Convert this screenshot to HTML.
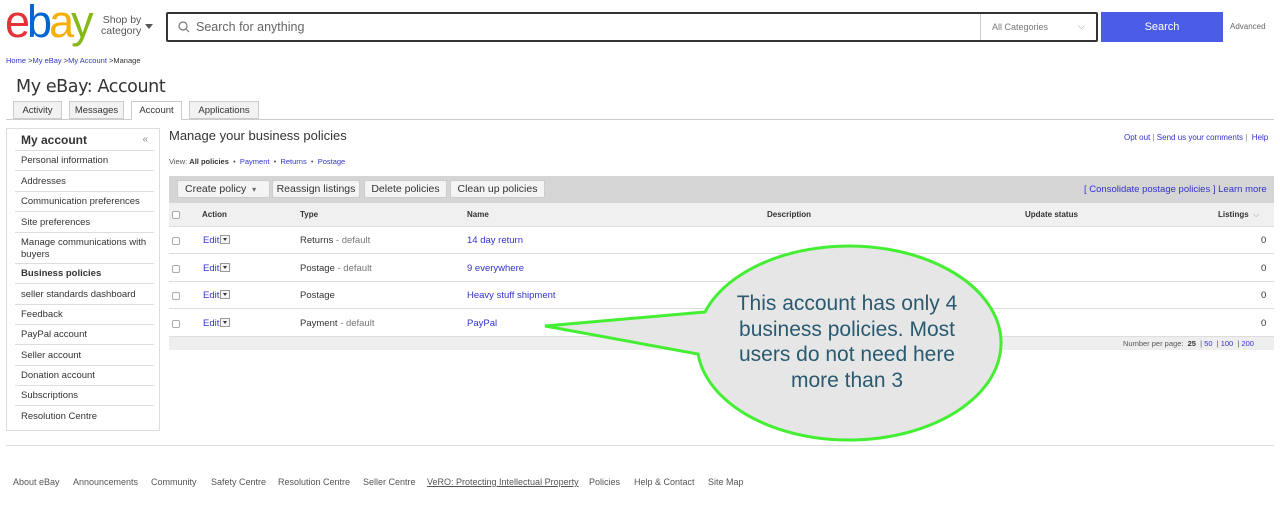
<!DOCTYPE html>
<html><head><style>
*{margin:0;padding:0;box-sizing:border-box}
body{width:1280px;height:510px;position:relative;background:#fff;font-family:"Liberation Sans",Arial,sans-serif;color:#333;overflow:hidden}
.a{position:absolute;white-space:nowrap}
.lk{color:#3333cc}
.side div{position:absolute;left:15px;width:139px;font-size:9.5px;color:#333;border-bottom:1px solid #ddd;padding-left:6px}
.btn{position:absolute;top:180px;height:18px;background:#f4f4f4;border:1px solid #ccc;border-radius:2px;font-size:10.5px;color:#333;text-align:center;line-height:16px}
.row{position:absolute;left:169px;width:1105px;height:1px;background:#ddd}
.cb{position:absolute;left:172px;width:8px;height:8px;border:1px solid #aaa;border-radius:2px;background:#fff}
.ed{position:absolute;left:203px;font-size:9.5px;color:#3333cc}
.ed span{display:inline-block;width:10px;height:9px;border:1px solid #999;margin-left:1px;vertical-align:-1px;position:relative;background:#f5f5f5}
.ed span:after{content:"";position:absolute;left:2px;top:2px;border:2.5px solid transparent;border-top:3px solid #333}
.t{position:absolute;font-size:9.5px}
.foot{position:absolute;top:477px;font-size:9px;color:#555}
</style></head><body>
<!-- logo -->
<div class="a" style="left:5px;top:-2px;font-size:45px;letter-spacing:-3px;line-height:48px">
<span style="color:#e53238">e</span><span style="color:#0064d2">b</span><span style="color:#f5af02">a</span><span style="color:#86b817">y</span></div>
<div class="a" style="left:101px;top:15px;font-size:10.5px;color:#555;line-height:11px;text-align:right">Shop by<br>category</div>
<div class="a" style="left:145px;top:24px;border:4px solid transparent;border-top:5px solid #555"></div>
<div class="a" style="left:166px;top:12px;width:932px;height:30px;border:2px solid #333;border-radius:2px"></div>
<svg class="a" style="left:178px;top:21px" width="12" height="12"><circle cx="5" cy="5" r="4" fill="none" stroke="#777" stroke-width="1.2"/><line x1="8" y1="8" x2="11" y2="11" stroke="#777" stroke-width="1.2"/></svg>
<div class="a" style="left:196px;top:20px;font-size:12.5px;color:#666">Search for anything</div>
<div class="a" style="left:980px;top:14px;width:1px;height:26px;background:#ccc"></div>
<div class="a" style="left:992px;top:22px;font-size:9px;color:#777">All Categories</div>
<div class="a" style="left:1078px;top:21px;font-size:9px;color:#888">⌵</div>
<div class="a" style="left:1101px;top:12px;width:122px;height:30px;background:#4b5ce8;color:#fff;font-size:11px;text-align:center;line-height:30px">Search</div>
<div class="a" style="left:1230px;top:22px;font-size:8px;color:#666">Advanced</div>
<div class="a" style="left:6px;top:56px;font-size:7.5px;color:#333"><span class="lk">Home</span> &gt;<span class="lk">My eBay</span> &gt;<span class="lk">My Account</span> &gt;Manage</div>
<div class="a" style="left:16px;top:77px;font-size:17.5px;color:#333;font-family:'DejaVu Sans',sans-serif;letter-spacing:-0.4px">My eBay: Account</div>
<!-- tabs -->
<div class="a" style="left:6px;top:119px;width:1268px;height:1px;background:#ccc"></div>
<div class="a" style="left:13px;top:101px;width:49px;height:18px;border:1px solid #ccc;background:#f2f2f2;font-size:9.5px;text-align:center;line-height:17px">Activity</div>
<div class="a" style="left:69px;top:101px;width:55px;height:18px;border:1px solid #ccc;background:#f2f2f2;font-size:9.5px;text-align:center;line-height:17px">Messages</div>
<div class="a" style="left:131px;top:101px;width:51px;height:19px;border:1px solid #ccc;border-bottom:none;background:#fff;font-size:9.5px;text-align:center;line-height:17px">Account</div>
<div class="a" style="left:189px;top:101px;width:70px;height:18px;border:1px solid #ccc;background:#f2f2f2;font-size:9.5px;text-align:center;line-height:17px">Applications</div>
<!-- sidebar -->
<div class="a" style="left:6px;top:128px;width:154px;height:303px;border:1px solid #ddd"></div>
<div class="side">
<div style="top:130px;height:21px;font-size:12px;font-weight:bold;line-height:20px">My account<span style="position:absolute;right:6px;font-weight:normal;font-size:10px;color:#888">«</span></div>
<div style="top:151px;height:20px;line-height:20px">Personal information</div>
<div style="top:171px;height:21px;line-height:21px">Addresses</div>
<div style="top:192px;height:20px;line-height:20px">Communication preferences</div>
<div style="top:212px;height:21px;line-height:21px">Site preferences</div>
<div style="top:233px;height:31px;line-height:12px;padding-top:4px">Manage communications with<br>buyers</div>
<div style="top:264px;height:20px;line-height:20px;font-weight:bold">Business policies</div>
<div style="top:284px;height:21px;line-height:21px">seller standards dashboard</div>
<div style="top:305px;height:20px;line-height:20px">Feedback</div>
<div style="top:325px;height:20px;line-height:20px">PayPal account</div>
<div style="top:345px;height:21px;line-height:21px">Seller account</div>
<div style="top:366px;height:20px;line-height:20px">Donation account</div>
<div style="top:386px;height:20px;line-height:20px">Subscriptions</div>
<div style="top:406px;height:21px;line-height:21px;border-bottom:none">Resolution Centre</div>
</div>
<!-- main -->
<div class="a" style="left:169px;top:128px;font-size:13px;color:#333">Manage your business policies</div>
<div class="a" style="left:1124px;top:133px;font-size:8px;color:#888"><span class="lk">Opt out</span> | <span class="lk">Send us your comments</span> | &nbsp;<span class="lk">Help</span></div>
<div class="a" style="left:169px;top:157px;font-size:7.5px;color:#555">View: <b style="color:#333">All policies</b> &nbsp;• &nbsp;<span class="lk">Payment</span> &nbsp;• &nbsp;<span class="lk">Returns</span> &nbsp;• &nbsp;<span class="lk">Postage</span></div>
<div class="a" style="left:169px;top:176px;width:1105px;height:27px;background:#d5d5d5"></div>
<div class="btn" style="left:177px;width:93px;text-align:left;padding-left:7px">Create policy &nbsp;<span style="font-size:8px;color:#666">▾</span></div>
<div class="btn" style="left:272px;width:88px">Reassign listings</div>
<div class="btn" style="left:364px;width:83px">Delete policies</div>
<div class="btn" style="left:450px;width:95px">Clean up policies</div>
<div class="a lk" style="left:1084px;top:184px;font-size:9.5px">[ Consolidate postage policies ] Learn more</div>
<div class="a" style="left:169px;top:203px;width:1105px;height:23px;background:#f0f0f0"></div>
<div class="cb" style="top:211px"></div>
<div class="t" style="left:202px;top:210px;font-size:8px;font-weight:bold">Action</div>
<div class="t" style="left:300px;top:210px;font-size:8px;font-weight:bold">Type</div>
<div class="t" style="left:467px;top:210px;font-size:8px;font-weight:bold">Name</div>
<div class="t" style="left:767px;top:210px;font-size:8px;font-weight:bold">Description</div>
<div class="t" style="left:1025px;top:210px;font-size:8px;font-weight:bold">Update status</div>
<div class="t" style="left:1218px;top:210px;font-size:8px;font-weight:bold">Listings &nbsp;<span style="color:#999;font-weight:normal">⌵</span></div>
<div class="row" style="top:226px"></div>
<div class="row" style="top:253px"></div>
<div class="row" style="top:281px"></div>
<div class="row" style="top:308px"></div>
<div class="a" style="left:169px;top:336px;width:1105px;height:14px;background:#eee;border-top:1px solid #ddd"></div>
<div class="cb" style="top:237px"></div><div class="cb" style="top:265px"></div><div class="cb" style="top:292px"></div><div class="cb" style="top:320px"></div>
<div class="ed" style="top:235px">Edit<span></span></div>
<div class="ed" style="top:263px">Edit<span></span></div>
<div class="ed" style="top:290px">Edit<span></span></div>
<div class="ed" style="top:318px">Edit<span></span></div>
<div class="t" style="left:300px;top:235px">Returns <span style="color:#777">- default</span></div>
<div class="t" style="left:300px;top:263px">Postage <span style="color:#777">- default</span></div>
<div class="t" style="left:300px;top:290px">Postage</div>
<div class="t" style="left:300px;top:318px">Payment <span style="color:#777">- default</span></div>
<div class="t lk" style="left:467px;top:235px">14 day return</div>
<div class="t lk" style="left:467px;top:263px">9 everywhere</div>
<div class="t lk" style="left:467px;top:290px">Heavy stuff shipment</div>
<div class="t lk" style="left:467px;top:318px">PayPal</div>
<div class="t" style="left:1261px;top:235px">0</div>
<div class="t" style="left:1261px;top:263px">0</div>
<div class="t" style="left:1261px;top:290px">0</div>
<div class="t" style="left:1261px;top:318px">0</div>
<div class="a" style="left:1123px;top:339px;font-size:7.5px;color:#555">Number per page: &nbsp;<b style="color:#333">25</b> &nbsp;| <span class="lk">50</span> &nbsp;| <span class="lk">100</span> &nbsp;| <span class="lk">200</span></div>
<!-- bubble -->
<svg class="a" style="left:0;top:0" width="1280" height="510">
<path d="M705,312 L545,326 L698,354 A152,97 0 1 0 705,312 Z" fill="#e6e6e6" stroke="#44ee33" stroke-width="3" stroke-linejoin="miter"/>
</svg>
<div class="a" style="left:697px;top:291px;width:300px;text-align:center;font-size:21px;line-height:25.5px;color:#2a5a70;white-space:normal">This account has only 4<br>business policies. Most<br>users do not need here<br>more than 3</div>
<!-- footer -->
<div class="a" style="left:6px;top:445px;width:1268px;height:1px;background:#ddd"></div>
<div class="foot" style="left:13px">About eBay</div>
<div class="foot" style="left:73px">Announcements</div>
<div class="foot" style="left:151px">Community</div>
<div class="foot" style="left:211px">Safety Centre</div>
<div class="foot" style="left:278px">Resolution Centre</div>
<div class="foot" style="left:363px">Seller Centre</div>
<div class="foot" style="left:427px;text-decoration:underline">VeRO: Protecting Intellectual Property</div>
<div class="foot" style="left:589px">Policies</div>
<div class="foot" style="left:634px">Help &amp; Contact</div>
<div class="foot" style="left:708px">Site Map</div>
</body></html>
